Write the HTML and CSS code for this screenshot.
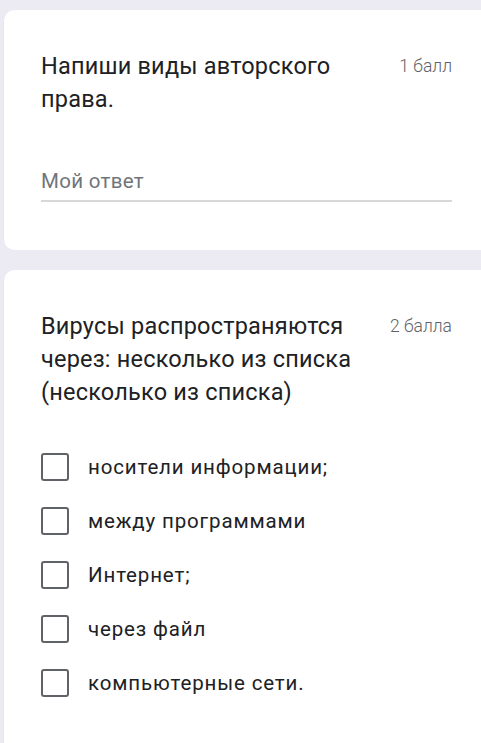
FILE: index.html
```html
<!DOCTYPE html>
<html lang="ru">
<head>
<meta charset="utf-8">
<link rel="stylesheet" href="styles.css">
</head>
<body>
<div class="page">
  <section class="card card-first">
    <div class="head">
      <div class="title">Напиши виды авторского права.</div>
      <div class="points">1 балл</div>
    </div>
    <div class="answer">
      <div class="answer-text">Мой ответ</div>
      <div class="answer-line"></div>
    </div>
  </section>
  <section class="card card-second">
    <div class="head">
      <div class="title">Вирусы распространяются через: несколько из списка (несколько из списка)</div>
      <div class="points">2 балла</div>
    </div>
    <div class="options">
      <label class="option"><span class="box"></span><span class="label">носители информации;</span></label>
      <label class="option"><span class="box"></span><span class="label">между программами</span></label>
      <label class="option"><span class="box"></span><span class="label">Интернет;</span></label>
      <label class="option"><span class="box"></span><span class="label">через файл</span></label>
      <label class="option"><span class="box"></span><span class="label">компьютерные сети.</span></label>
    </div>
  </section>
</div>
</body>
</html>
```

FILE: styles.css
```css
html, body {
  margin: 0;
  padding: 0;
  background: #ecebf3;
  overflow: hidden;
}
body {
  font-family: Roboto, "Noto Sans", sans-serif;
  color: #202124;
}
.page {
  padding: 10px 0 0 4px;
  display: flex;
  flex-direction: column;
  gap: 20px;
}
.card {
  background: #ffffff;
  border-radius: 10px 0 0 10px;
  padding: 40px 29px 0 37px;
  box-shadow: -0.5px 0 0 #e2e1ea;
}
.card-first {
  height: 200px;
}
.card-second {
  height: 480px;
}
.head {
  display: flex;
  align-items: flex-start;
  justify-content: space-between;
  gap: 16px;
}
.title {
  font-size: 23.5px;
  line-height: 33px;
  width: 330px;
  letter-spacing: 0.2px;
}
.points {
  font-size: 17.5px;
  color: #5f6368;
  line-height: 33px;
  white-space: nowrap;
  font-weight: 300;
}
.answer {
  margin-top: 53px;
}
.answer-text {
  font-size: 20.5px;
  color: #70757a;
  line-height: 24px;
  letter-spacing: 0.3px;
}
.answer-line {
  margin-top: 7px;
  height: 1.5px;
  background: #d8d8db;
}
.options {
  margin-top: 31px;
  display: flex;
  flex-direction: column;
}
.option {
  display: flex;
  align-items: center;
  height: 54px;
  gap: 19px;
}
.box {
  width: 24px;
  height: 24px;
  border: 2.5px solid #5f6368;
  border-radius: 3px;
  flex: none;
}
.label {
  font-size: 20.5px;
  letter-spacing: 0.85px;
  color: #202124;
}
```
